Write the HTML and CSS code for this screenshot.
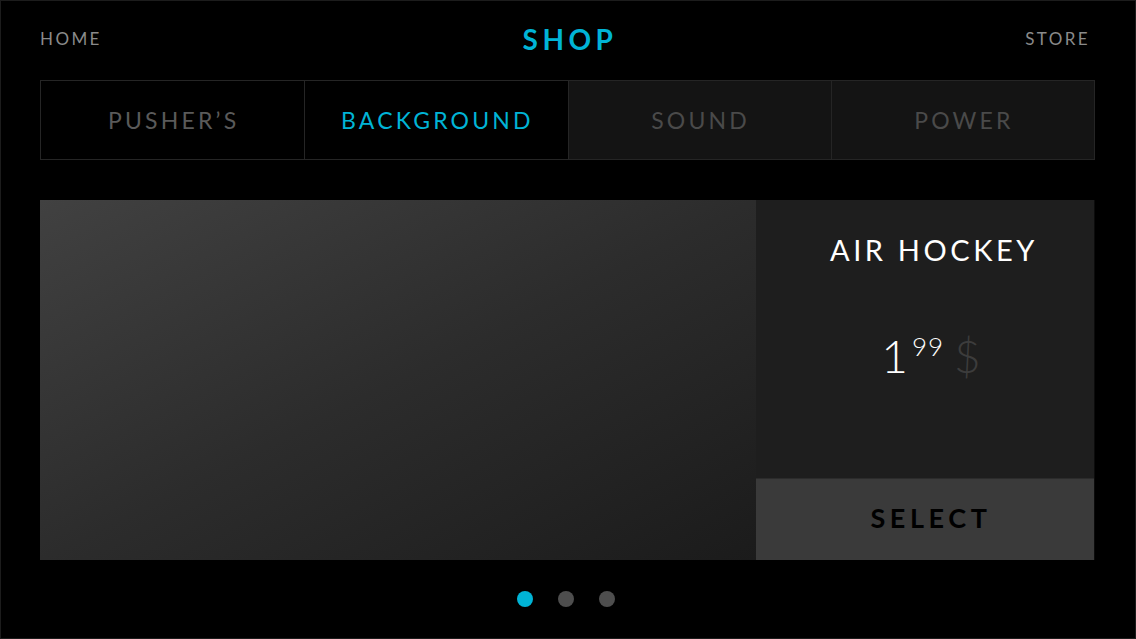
FILE: index.html
```html
<!DOCTYPE html>
<html>
<head>
<meta charset="utf-8">
<link rel="stylesheet" href="styles.css">
</head>
<body>
<div class="page">
  <header class="top">
    <span class="nav">HOME</span>
    <span class="title">SHOP</span>
    <span class="nav">STORE</span>
  </header>
  <nav class="tabs">
    <div class="tab">PUSHER’S</div>
    <div class="tab active">BACKGROUND</div>
    <div class="tab dim">SOUND</div>
    <div class="tab dim">POWER</div>
  </nav>
  <section class="card">
    <div class="preview"></div>
    <div class="side">
      <div class="info">
        <div class="name">AIR HOCKEY</div>
        <div class="price"><span class="int">1</span><span class="cents">99</span><span class="cur">$</span></div>
      </div>
      <div class="select">SELECT</div>
    </div>
  </section>
  <div class="dots">
    <span class="dot on"></span><span class="dot"></span><span class="dot"></span>
  </div>
</div>
</body>
</html>
```

FILE: styles.css
```css
html, body {
  margin: 0;
  padding: 0;
  background: #000;
}
.page {
  box-sizing: border-box;
  width: 1136px;
  height: 639px;
  border: 1px solid #1c1c1c;
  padding: 0 40px 0 39px;
  font-family: Lato, "Open Sans", sans-serif;
  display: flex;
  flex-direction: column;
}
.top {
  box-sizing: border-box;
  height: 79px;
  padding-bottom: 4px;
  display: flex;
  align-items: center;
  justify-content: space-between;
}
.nav {
  color: #8a8a8a;
  font-size: 17px;
  letter-spacing: 2.4px;
  width: 120px;
}
.nav:last-child { text-align: right; margin-right: 5px; }
.title {
  color: #00b4d6;
  font-size: 28px;
  font-weight: 700;
  letter-spacing: 4.5px;
  margin-left: 10px;
}
.tabs {
  height: 80px;
  display: grid;
  grid-template-columns: repeat(4, 1fr);
  border: 1px solid #252525;
  box-sizing: border-box;
  width: 1055px;
}
.tab {
  display: flex;
  align-items: center;
  justify-content: center;
  color: #5a5a5a;
  font-size: 23px;
  letter-spacing: 3.2px;
  padding-left: 2px;
  background: #000;
  border-left: 1px solid #252525;
}
.tab:first-child { border-left: none; }
.tab.active { color: #00b4d6; }
.tab.dim { background: #141414; color: #4a4a4a; }
.card {
  margin-top: 40px;
  height: 360px;
  width: 1055px;
  display: flex;
}
.preview {
  flex: 1;
  background: linear-gradient(to bottom right, #414141 0%, #2c2c2c 50%, #1b1b1b 100%);
}
.side {
  width: 338px;
  display: flex;
  flex-direction: column;
  background: #1e1e1e;
  border-right: 1px solid #0c0c0c;
}
.info {
  flex: 1;
  display: flex;
  flex-direction: column;
  align-items: center;
}
.name {
  margin-top: 32px;
  color: #fff;
  font-size: 29px;
  letter-spacing: 3.6px;
  margin-left: 18px;
}
.price {
  margin-top: 66px;
  display: flex;
  align-items: flex-start;
  line-height: 1;
  margin-left: 12px;
}
.int {
  color: #fff;
  font-size: 46px;
  font-weight: 300;
}
.cents {
  color: #fff;
  font-size: 26px;
  font-weight: 300;
  margin-left: 4px;
  letter-spacing: 1px;
}
.cur {
  color: #3c3c3c;
  font-size: 46px;
  font-weight: 300;
  margin-left: 10px;
}
.select {
  height: 82px;
  background: #3a3a3a;
  display: flex;
  align-items: center;
  justify-content: center;
  color: #000;
  font-size: 27px;
  font-weight: 700;
  letter-spacing: 4.6px;
  padding: 0 0 4px 12px;
  border-top: 1px solid #2c2c2c;
  box-sizing: border-box;
}
.dots {
  flex: 1;
  display: flex;
  align-items: center;
  justify-content: center;
  gap: 25px;
  padding-right: 4px;
}
.dot {
  width: 16px;
  height: 16px;
  border-radius: 50%;
  background: #4e4e4e;
}
.dot.on { background: #00b4d6; }
```
